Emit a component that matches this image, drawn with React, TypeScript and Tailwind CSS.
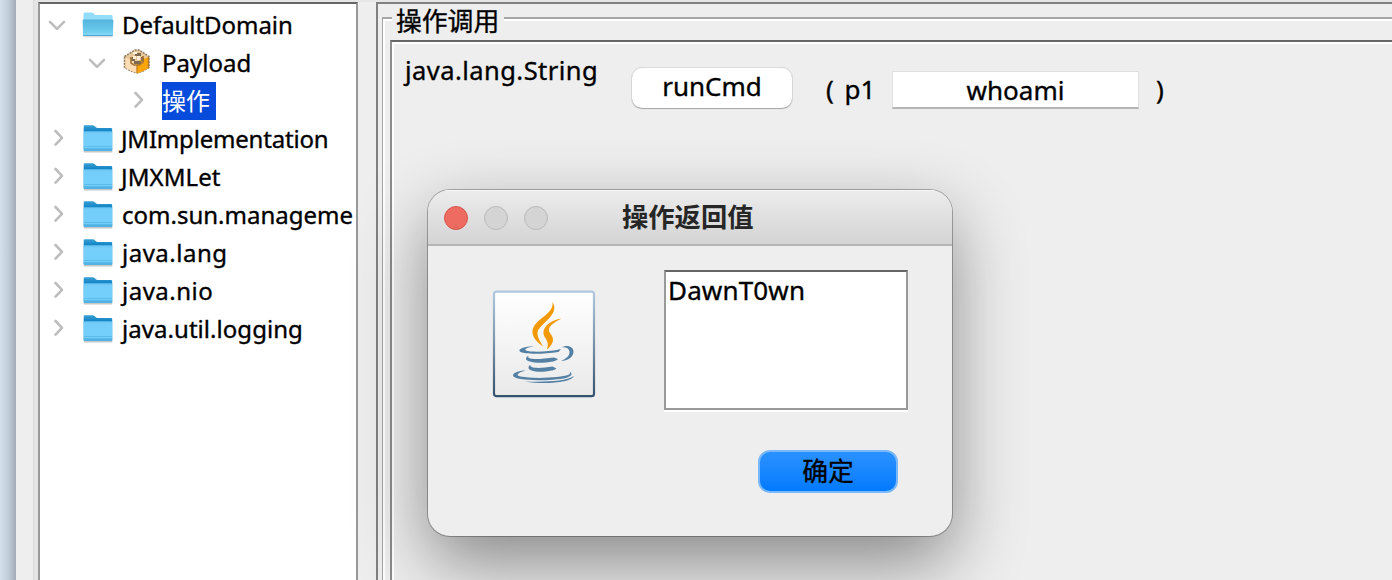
import React from "react";

const latin = "font-['Noto_Sans','Noto_Sans_CJK_SC',sans-serif]";
const cjk = "font-['Noto_Sans_CJK_SC',sans-serif]";

function Chevron({ open = false }: { open?: boolean }) {
  return (
    <svg className="h-5 w-5 shrink-0" viewBox="0 0 20 20" fill="none" stroke="#bdbdbd" strokeWidth="2.6" strokeLinecap="round" strokeLinejoin="round">
      <path d={open ? "M3 6.8 10 13.8 17 6.8" : "M6.5 3 13 9.8 6.5 16.6"} />
    </svg>
  );
}

function OpenFolder() {
  return (
    <svg className="h-[26px] w-8 shrink-0" viewBox="0 0 32 26">
      <defs>
        <linearGradient id="openFront" x1="0" y1="0" x2="0" y2="1">
          <stop offset="0" stopColor="#55b4da" />
          <stop offset="0.5" stopColor="#64c4e8" />
          <stop offset="1" stopColor="#7cd5f4" />
        </linearGradient>
      </defs>
      <path d="M1.5 24.800h29" stroke="#bbb" strokeOpacity=".7" />
      <path d="M1.500 23V2.100Q1.500.4 3.200.4h6.500q1.100 0 1.700.8l.8 1.100q.5.6 1.500.6h15.500q1.400 0 1.400 1.400V23z" fill="#93dcfa" />
      <path d="M.6 8.500q0-1 1-1h28.800q1 0 1 1l-.5 14.500q0 1-1 1H2.100q-1 0-1-1z" fill="url(#openFront)" />
      <path d="M1.200 23.400h29.600" stroke="#46a6ce" strokeWidth="1" />
      <path d="M1.300 22h29.400" stroke="#8cdcf8" strokeWidth="1" />
    </svg>
  );
}

function Folder() {
  return (
    <svg className="h-[30px] w-8 shrink-0" viewBox="0 0 32 30">
      <defs>
        <linearGradient id="folderFront" x1="0" y1="0" x2="0" y2="1">
          <stop offset="0" stopColor="#68c3f1" />
          <stop offset=".15" stopColor="#75cefa" />
          <stop offset="1" stopColor="#72cffa" />
        </linearGradient>
        <linearGradient id="folderBack" x1="0" y1="0" x2="0" y2="1">
          <stop offset="0" stopColor="#3a9fd4" />
          <stop offset=".25" stopColor="#0f82c4" />
        </linearGradient>
      </defs>
      <rect x="1.500" y="26" width="29" height="2.600" rx="1" fill="#999" opacity=".55" />
      <path d="M1.700 26V2.600Q1.700 1.300 3 1.300h7.800q1 0 1.700.7l1.400 1.300q.7.600 1.600.6h13.400q1.300 0 1.300 1.300V26z" fill="url(#folderBack)" />
      <path d="M1.700 8.300q0-1.100 1.100-1.100h26.400q1 0 1 1v17.600q0 1.200-1.200 1.200H2.900q-1.200 0-1.200-1.200z" fill="url(#folderFront)" />
      <path d="M2 22.500h28" stroke="#5bbbe9" strokeWidth="1" />
      <path d="M1.800 24.300h28.400v1.400q0 1.200-1.200 1.200H3q-1.200 0-1.200-1.200z" fill="#50b3e4" />
    </svg>
  );
}

function Bean() {
  return (
    <svg className="h-[26px] w-[28px] shrink-0" viewBox="0 0 28 26">
      <path d="M1.500 7.500 8 3.500l4-2.500h4l4 2.500 6 4v11l-6 3.500-6 2-6-2-6.500-3.500z" fill="#e9c99c" stroke="#8d7a60" strokeWidth="1.500" strokeDasharray="2 1" />
      <path d="M14 13 20 10l6-2v11l-6 3-6 2.500z" fill="#fda50a" />
      <path d="M2.500 8.500l6 3 5.500 2v10.500l-6-2-5.500-3z" fill="#fbdcb4" />
      <path d="M14 16v8" stroke="#c98a25" strokeWidth="1.500" />
      <path d="M8 8h4v4H8zM12 4h6v3h-6zM18 8h3v4h-3zM11 12h7v3h-7z" fill="#7d6a50" />
      <path d="M10 3h4v2h-4zM14 7h3v4h-3zM10 7h3v3h-3z" fill="#fff0d6" />
      <path d="M8 8v6l3 2h5l4-3V7" fill="none" stroke="#a67530" strokeWidth="1.600" />
      <path d="M24.800 8h1.300v11h-1.300z" fill="#b07a28" />
    </svg>
  );
}

function JavaLogo() {
  return (
    <svg className="block h-[108px] w-[104px]" viewBox="0 0 104 108">
      <defs>
        <linearGradient id="tileEdge" x1="0" y1="0" x2="0" y2="1">
          <stop offset="0" stopColor="#b1c8de" />
          <stop offset=".5" stopColor="#7893ab" />
          <stop offset="1" stopColor="#35536e" />
        </linearGradient>
        <linearGradient id="tileFill" x1="0" y1="0" x2="0" y2="1">
          <stop offset="0" stopColor="#ffffff" />
          <stop offset="1" stopColor="#e9e9ea" />
        </linearGradient>
      </defs>
      <rect x="2" y="1.700" width="100" height="104.500" rx="2.500" fill="url(#tileFill)" stroke="url(#tileEdge)" strokeWidth="2.200" />
      <g fill="#f29a05">
        <path d="M60.300 12C64 17 62.500 22.500 57 28.500C49.500 36 45 39 45.500 44C46 48.500 48 51 51 56.500C44 51.500 40 46.500 40.500 41C41 35 46.500 30.500 52.500 26C58.500 21 61.500 17 60.300 12z" />
        <path d="M69.500 28.500C62 32.500 57.500 35.500 57 39.500C56.500 43 61 45 61 49.500C61 53.500 58 57 55 59.500C56.500 54 56 52 53 47.500C50.500 43.500 51 39.500 54.500 35.500C58 32 63 29.500 69.500 28.500z" />
      </g>
      <g fill="#5480a4" transform="translate(0 -.4)">
        <path d="M42 57C35 58 32.500 59.500 33.500 60.500C36 63 56 62.500 69 59.500L66.500 62.500C51 65 29.500 65 27.500 61.500C26.500 58.700 34 56.800 42 57z" />
        <path d="M69 58C75 54.500 82 57 81.500 62.500C81 68.500 75.500 71 69 71.500C75 69 78 65.500 77.500 62C77 58.500 73 57 69 58z" />
        <path d="M36.500 66.500C34 70.500 48 70 62 68L66 69.500C64.500 71 62 72 61 72C48 74.500 33.500 73 34 69C34.300 67.500 35.500 66.700 36.500 66.500z" />
        <path d="M38.500 75.500C37 79 49 79 60.500 77L64.500 79C62 80.500 61 81 59.500 81C48 83.500 36 82 36.500 78C36.700 76.500 37.500 75.800 38.500 75.500z" />
        <path d="M33.500 81C25 83.500 23.500 86 28.500 87C42 89.500 70 88 76 85.500C78.500 84.500 78.500 83.500 77.500 82C81.500 84.500 79 87 74 88.300C59 91.500 22 92 21 86C21 82.500 29 81 33.500 81z" />
        <path d="M82 86.500C80 93 52 95.500 33 91.800C53 92.500 73 92 82 86.500z" />
      </g>
    </svg>
  );
}

function Node({ label, spacing }: { label: string; spacing: string }) {
  return (
    <div className="flex h-[38px] items-center pl-[9px]">
      <div className="-mt-[3px]"><Chevron /></div>
      <div className="ml-[13px] flex"><Folder /></div>
      <span className={`whitespace-nowrap leading-[36px] ${spacing}`}>{label}</span>
    </div>
  );
}

export default function App() {
  return (
    <div className={`relative flex h-[580px] w-[1392px] overflow-hidden bg-[#eeeeee] text-[26px] text-black [-webkit-text-stroke:0.35px_currentColor] ${latin}`}>
      <div className="h-full w-4 shrink-0 bg-linear-to-r from-[#d4e0ec] via-[#c2ceda] to-[#a2abb5]" />
      <div className="h-full w-[17px] shrink-0" />
      <div className="h-full w-[5px] shrink-0 border-l border-[#dadada] bg-[#e4e4e4]" />
      <div className="h-full w-[320px] shrink-0 bg-[#e6e6e6] pt-0.5">
        <div className="h-[578px] overflow-hidden border-x-2 border-t-2 border-x-[#999999] border-t-[#666666] bg-white pt-0.5 text-[24px]">
          <div className="flex h-[38px] items-center pl-[7px]">
            <Chevron open />
            <div className="ml-[15px] flex"><OpenFolder /></div>
            <span className="ml-[8px] leading-[36px] tracking-[-0.05px]">DefaultDomain</span>
          </div>
          <div className="flex h-[38px] items-center pl-[47px]">
            <Chevron open />
            <div className="-mt-0.5 ml-4 flex"><Bean /></div>
            <span className="ml-[11px] leading-[36px]">Payload</span>
          </div>
          <div className="flex h-[38px] items-center pl-[89px]">
            <div className="-mt-[3px]"><Chevron /></div>
            <span className={`ml-[13px] h-[38px] w-[54px] bg-[#064bdb] text-[24px] leading-[36px] text-white [-webkit-text-stroke:0] ${cjk}`}>操作</span>
          </div>
          <Node label="JMImplementation" spacing="ml-[7px] tracking-[-0.2px]" />
          <Node label="JMXMLet" spacing="ml-[7px] tracking-[0.1px]" />
          <Node label="com.sun.manageme" spacing="ml-[8px]" />
          <Node label="java.lang" spacing="ml-[8px] tracking-[0.5px]" />
          <Node label="java.nio" spacing="ml-[8px] tracking-[0.5px]" />
          <Node label="java.util.logging" spacing="ml-[8px] tracking-[0.05px]" />
        </div>
      </div>
      <div className="flex h-full min-w-0 flex-1 flex-col">
        <div className="h-0.5 shrink-0 bg-[#e6e6e6]" />
        <div className="ml-[18px] flex flex-1 flex-col border-l-2 border-t-2 border-[#808080]">
          <div className="flex h-9 items-start">
            <div className="ml-1 mt-[13px] h-[23px] w-[10px] border-l border-t-2 border-[#a6a6a6]">
              <div className="h-full border-l-2 border-t-2 border-white" />
            </div>
            <span className={`ml-1 w-[108px] whitespace-nowrap text-[25.8px] leading-[32px] ${cjk}`}>操作调用</span>
            <div className="mt-[13px] h-1 flex-1 border-b-2 border-t-2 border-b-white border-t-[#a6a6a6]" />
          </div>
          <div className="ml-1 flex flex-1 border-l border-[#a6a6a6]">
            <div className="w-[7px] shrink-0 border-l-2 border-white" />
            <div className="flex-1 border-l-2 border-t-2 border-l-[#8c8c8c] border-t-[#666666]">
              <div className="flex h-full items-start border-l-2 border-t-2 border-white">
                <span className="ml-[11px] mt-[7px] w-[227px] text-[25.5px] leading-[38px] tracking-[0.45px]">java.lang.String</span>
                <button className="mt-6 h-[40px] w-[160px] rounded-[10px] bg-white pb-1 leading-[34px] shadow-[0_0_0_1px_rgba(0,0,0,.08),0_1px_1px_rgba(0,0,0,.25)]">runCmd</button>
                <span className="ml-[34px] mt-[26px] w-[66px] whitespace-pre leading-[38px]"><span className="mr-1">(</span> p1</span>
                <div className="mt-[27px] h-[38px] w-[247px] border border-b-2 border-[#dedede] border-b-[#b5b5b5] bg-white text-center leading-[37px]">whoami</div>
                <span className="ml-[17px] mt-[26px] leading-[38px]">)</span>
              </div>
            </div>
          </div>
        </div>
      </div>

      <section className="absolute left-[428px] top-[190px] flex h-[346px] w-[524px] flex-col overflow-hidden rounded-[22px] bg-[#eeeeee] shadow-[0_0_0_1px_rgba(0,0,0,.28),0_27px_70px_rgba(0,0,0,.43)]">
        <header className="flex h-[56px] shrink-0 items-center border-b-2 border-[#b4b4b4] bg-linear-to-b from-[#ececec] to-[#d4d4d4] pl-4 pt-px shadow-[inset_0_1px_0_#f8f8f8]">
          <div className="h-6 w-6 rounded-full border border-[#d5574d] bg-[#ed6b60]" />
          <div className="ml-4 h-6 w-6 rounded-full border border-[#bababa] bg-[#d4d4d4]" />
          <div className="ml-4 h-6 w-6 rounded-full border border-[#bababa] bg-[#d4d4d4]" />
          <h1 className={`ml-[74px] pb-[4px] text-[26.3px] font-bold leading-[50px] text-[#262626] [-webkit-text-stroke:0] ${cjk}`}>操作返回值</h1>
        </header>
        <div className="flex pl-16 pt-[24px]">
          <div className="pt-5"><JavaLogo /></div>
          <div className="ml-[68px] h-[140px] w-[244px] border-2 border-[#999999] border-t-[#666666] bg-white pl-[2px] leading-[36px] tracking-[0.15px] shadow-[0_2px_0_#fff]">DawnT0wn</div>
        </div>
        <button className={`ml-[330px] mt-[40px] h-[43px] w-[140px] rounded-[12px] border-2 border-[#78b8fb] bg-linear-to-b from-[#2a91ff] to-[#007aff] pb-[5px] text-[25.8px] leading-[33px] ${cjk}`}>确定</button>
      </section>
    </div>
  );
}
